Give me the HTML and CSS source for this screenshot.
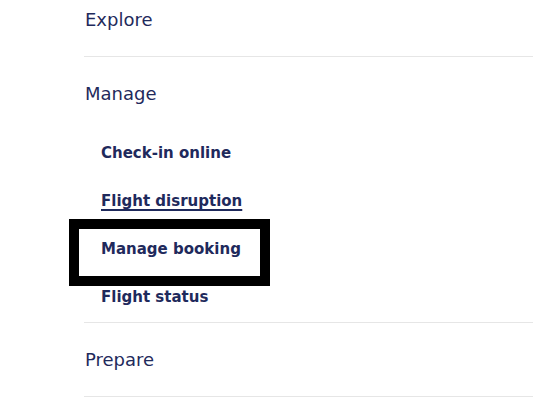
FILE: index.html
```html
<!DOCTYPE html>
<html lang="en">
<head>
<meta charset="utf-8">
<title>Menu</title>
<link rel="stylesheet" href="styles.css">
</head>
<body>
<nav class="menu">
  <section class="group">
    <h2 class="group-title">Explore</h2>
  </section>
  <section class="group">
    <h2 class="group-title">Manage</h2>
    <ul class="sub">
      <li><a class="sub-link" href="#">Check-in online</a></li>
      <li><a class="sub-link hover" href="#">Flight disruption</a></li>
      <li><a class="sub-link focus" href="#">Manage booking</a></li>
      <li><a class="sub-link" href="#">Flight status</a></li>
    </ul>
  </section>
  <section class="group">
    <h2 class="group-title">Prepare</h2>
  </section>
</nav>
</body>
</html>
```
FILE: styles.css
```css
html, body {
  margin: 0;
  padding: 0;
  background: #ffffff;
}
body {
  font-family: "DejaVu Sans", "Liberation Sans", sans-serif;
  color: #1f2a5c;
  overflow: hidden;
}
.menu {
  margin: -17px 0 0 84px;
}
.group {
  border-bottom: 1px solid #e6e6e6;
}
.group-title {
  margin: 0;
  padding: 27px 0 26px 1px;
  font-size: 18px;
  line-height: 20px;
  font-weight: normal;
}
.sub {
  list-style: none;
  margin: 0;
  padding: 0;
}
.sub li {
  display: flex;
  align-items: flex-start;
  box-sizing: border-box;
  height: 48px;
  padding-top: 3px;
}
.sub-link {
  display: block;
  margin-left: -5px;
  padding: 10px 19px 16px 22px;
  line-height: 21px;
  font-size: 15px;
  font-weight: bold;
  color: #1f2a5c;
  text-decoration: none;
}
.sub-link.hover {
  text-decoration: underline;
  text-decoration-thickness: 2px;
  text-underline-offset: 3px;
}
.sub-link.focus {
  outline: 10px solid #000000;
}
```
